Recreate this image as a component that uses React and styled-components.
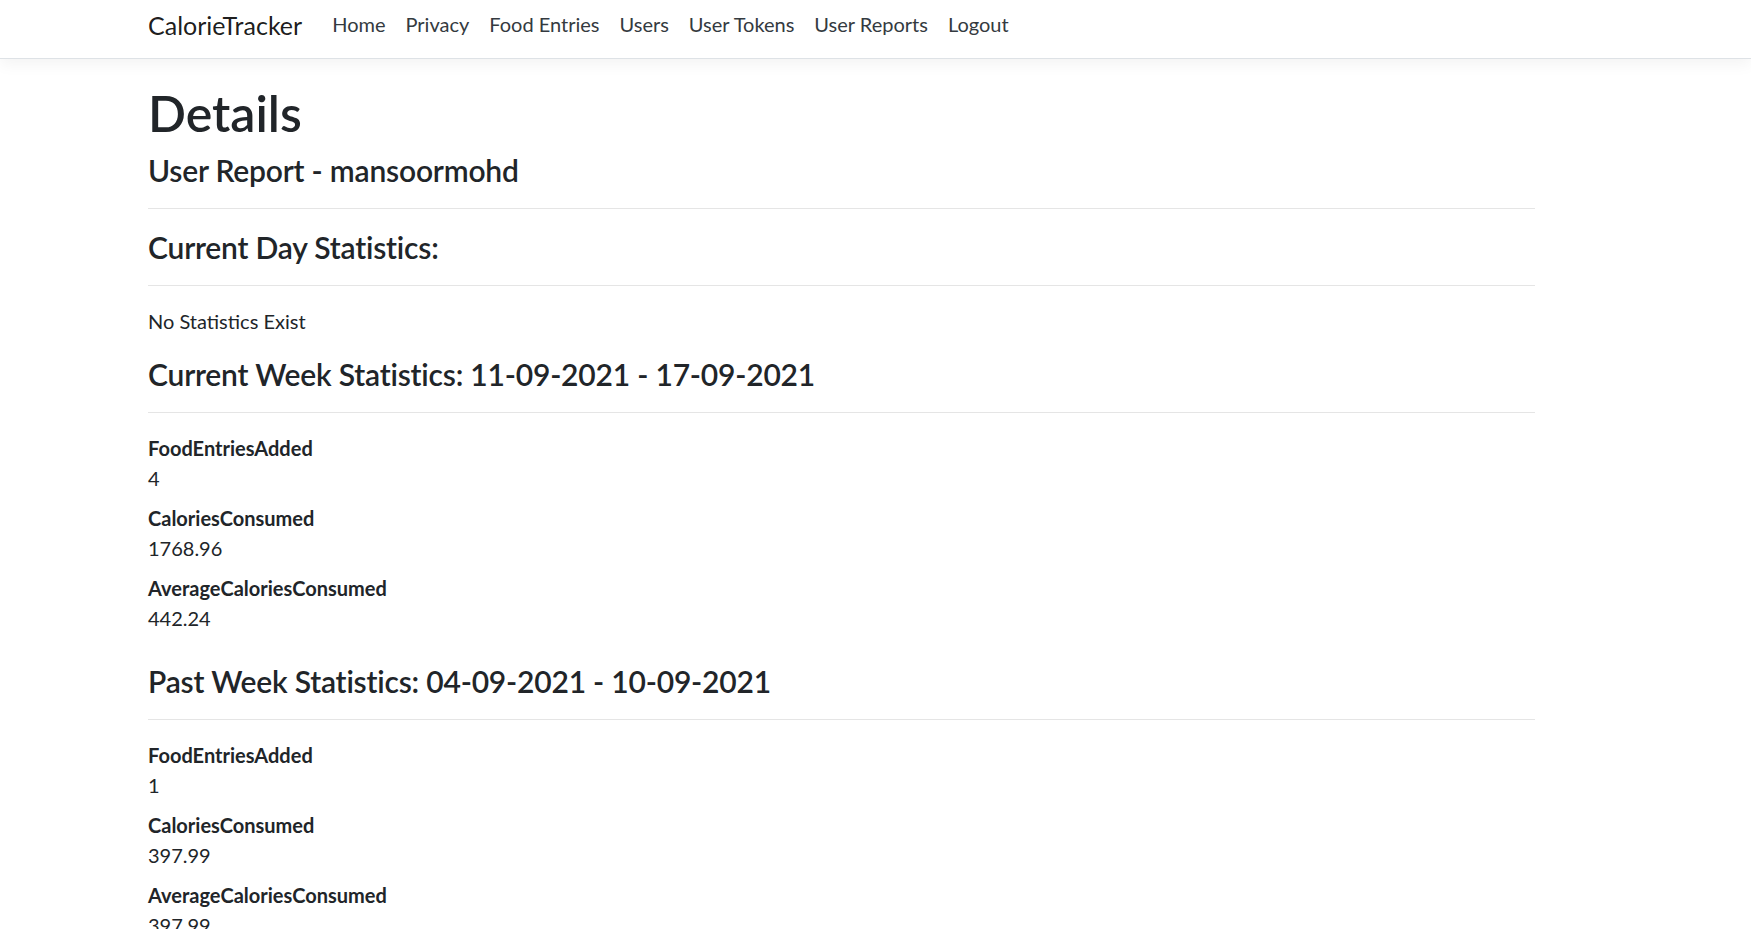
import React from 'react';
import styled, { createGlobalStyle } from 'styled-components';

const GlobalStyle = createGlobalStyle`
  html, body {
    margin: 0;
    padding: 0;
    background: #fff;
  }
  body {
    font-family: Lato, "Noto Sans", sans-serif;
    font-size: 20px;
    line-height: 1.5;
    color: #212529;
  }
  * { box-sizing: border-box; }
`;

const Navbar = styled.nav`
  height: 59px;
  background: #fff;
  border-bottom: 1px solid #dee2e6;
  box-shadow: 0 5px 15px rgba(0, 0, 0, 0.05);
  display: flex;
  align-items: flex-start;
  padding-left: 148px;
  position: relative;
  z-index: 1;
`;

const Brand = styled.a`
  font-size: 25px;
  line-height: 37.5px;
  padding-top: 6.5px;
  margin-right: 20px;
  color: rgba(0, 0, 0, 0.9);
  text-decoration: none;
  white-space: nowrap;
`;

const NavList = styled.ul`
  display: flex;
  list-style: none;
  margin: 0;
  padding: 0;
`;

const NavLink = styled.a`
  display: block;
  padding: 9px 10px 0;
  line-height: 30px;
  font-size: 20px;
  color: #343a40;
  text-decoration: none;
  white-space: nowrap;
`;

const Main = styled.main`
  padding: 23.5px 0 0 148px;
  width: 1535px;
`;

const Title = styled.h1`
  font-size: 50px;
  line-height: 60px;
  font-weight: 600;
  margin: 0 0 9px;
`;

const Heading = styled.h4`
  font-size: 30px;
  line-height: 36px;
  font-weight: 600;
  letter-spacing: -0.2px;
  margin: 0 0 10px;
`;

const Rule = styled.hr`
  margin: 20px 0;
  border: 0;
  border-top: 1px solid rgba(0, 0, 0, 0.1);
`;

const Note = styled.p`
  margin: 0 0 20px;
`;

const StatList = styled.dl`
  margin: 0 0 30px;
`;

const Term = styled.dt`
  font-weight: 700;
`;

const Value = styled.dd`
  margin: 0 0 10px;
`;

const links = ['Home', 'Privacy', 'Food Entries', 'Users', 'User Tokens', 'User Reports', 'Logout'];

const weeks = [
  {
    title: 'Current Week Statistics: 11-09-2021 - 17-09-2021',
    stats: [
      ['FoodEntriesAdded', '4'],
      ['CaloriesConsumed', '1768.96'],
      ['AverageCaloriesConsumed', '442.24'],
    ],
  },
  {
    title: 'Past Week Statistics: 04-09-2021 - 10-09-2021',
    stats: [
      ['FoodEntriesAdded', '1'],
      ['CaloriesConsumed', '397.99'],
      ['AverageCaloriesConsumed', '397.99'],
    ],
  },
];

export default function App() {
  return (
    <>
      <GlobalStyle />
      <Navbar>
        <Brand href="#">CalorieTracker</Brand>
        <NavList>
          {links.map(l => (
            <li key={l}><NavLink href="#">{l}</NavLink></li>
          ))}
        </NavList>
      </Navbar>
      <Main>
        <Title>Details</Title>
        <div>
          <Heading>User Report - mansoormohd</Heading>
          <Rule />
          <Heading>Current Day Statistics:</Heading>
          <Rule />
          <Note>No Statistics Exist</Note>
          {weeks.map(w => (
            <section key={w.title}>
              <Heading>{w.title}</Heading>
              <Rule />
              <StatList>
                {w.stats.map(([k, v]) => (
                  <React.Fragment key={k}>
                    <Term>{k}</Term>
                    <Value>{v}</Value>
                  </React.Fragment>
                ))}
              </StatList>
            </section>
          ))}
        </div>
      </Main>
    </>
  );
}
